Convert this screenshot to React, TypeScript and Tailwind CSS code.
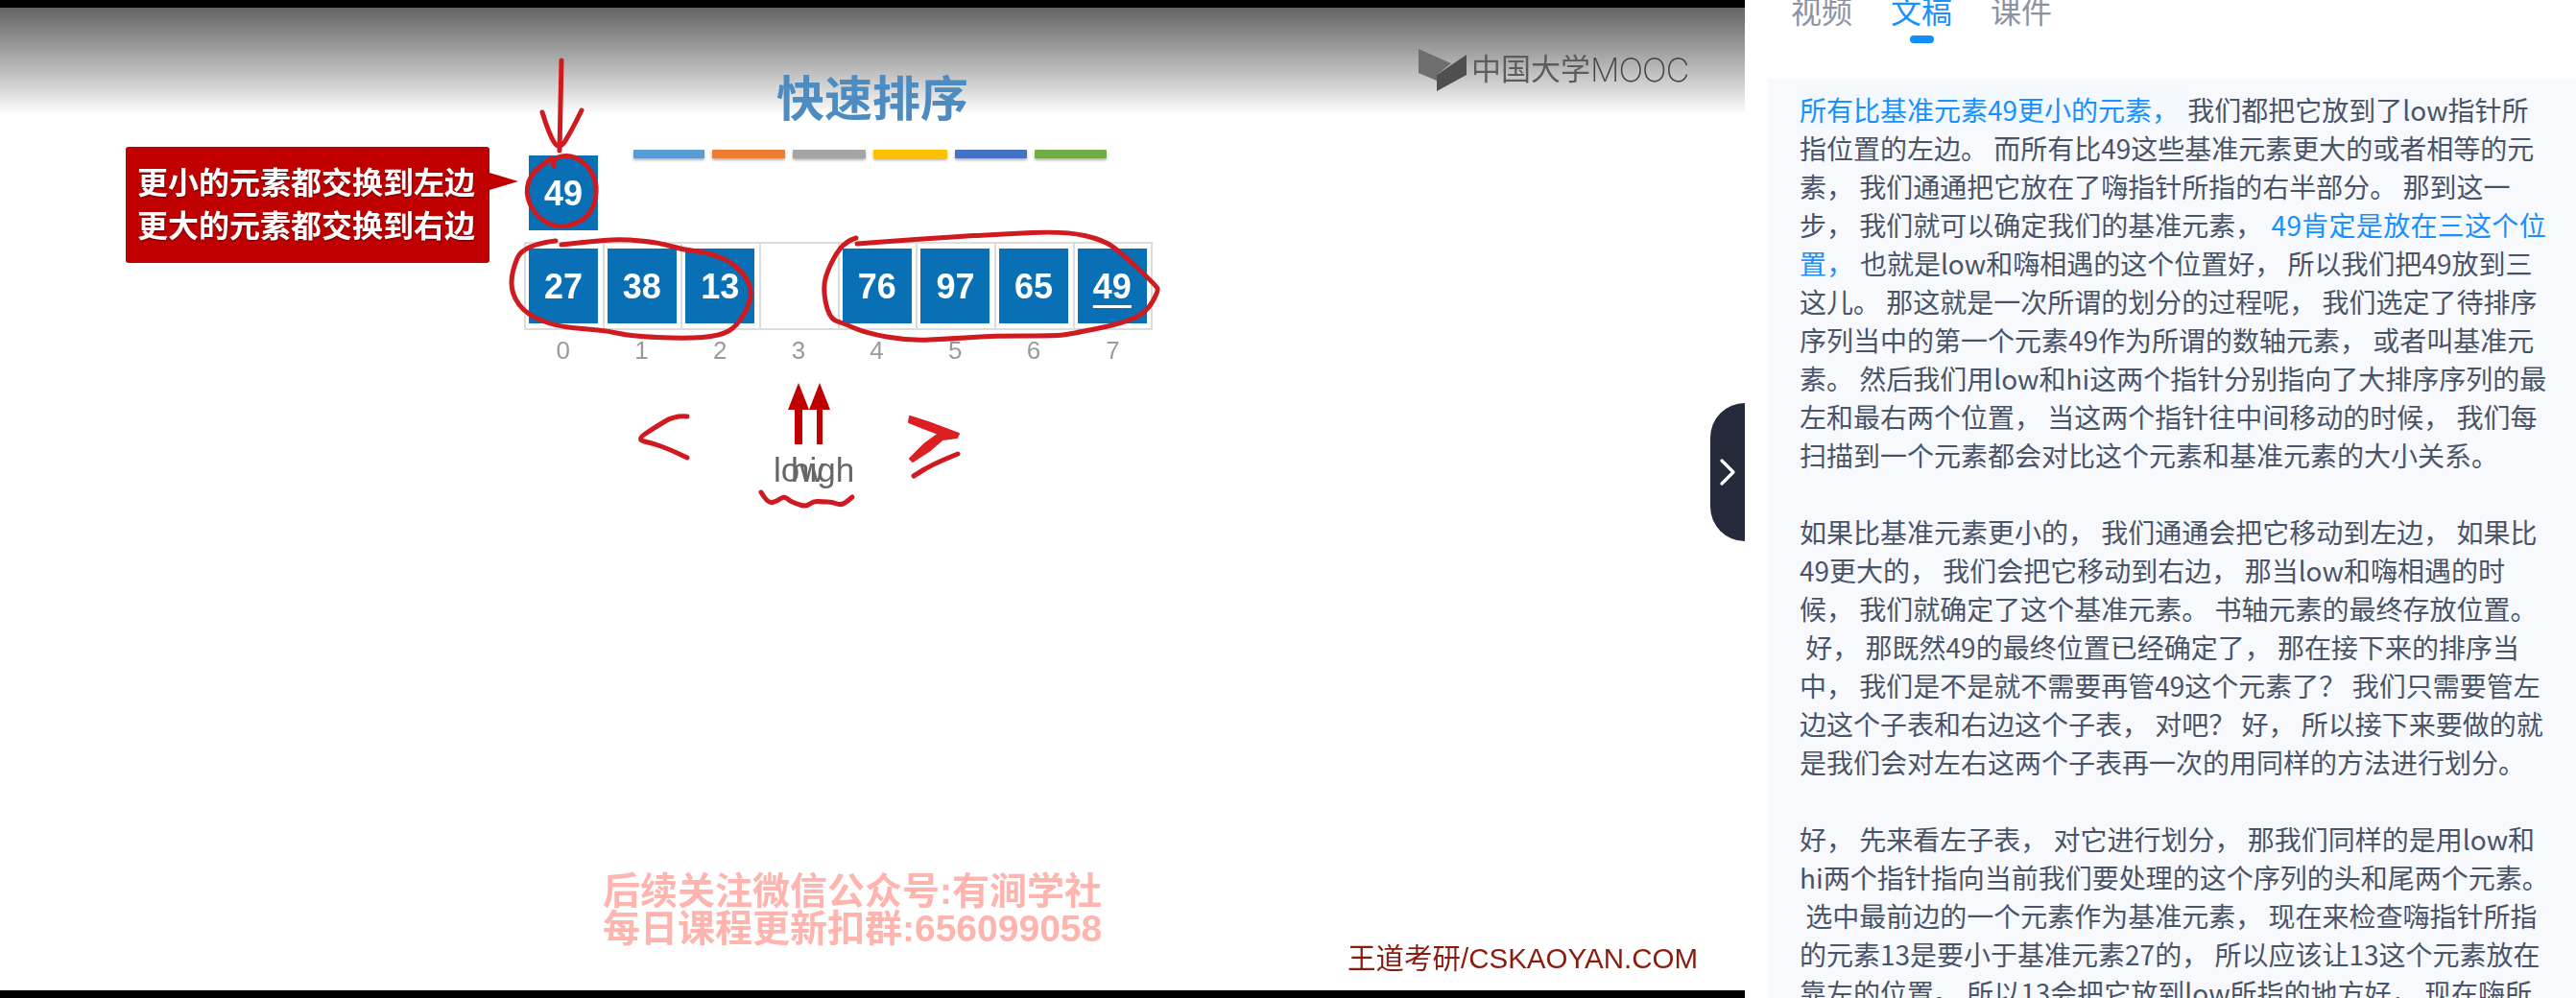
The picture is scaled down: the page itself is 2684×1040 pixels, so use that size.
import React from 'react';
import { ChevronRight } from 'lucide-react';

type Pt = [number, number];

// freehand strokes: smooth through the midpoints
const smooth = (pts: Pt[]) => {
  let d = `M${pts[0][0]} ${pts[0][1]}`;
  for (let i = 1; i < pts.length - 1; i++) {
    const mx = (pts[i][0] + pts[i + 1][0]) / 2;
    const my = (pts[i][1] + pts[i + 1][1]) / 2;
    d += ` Q${pts[i][0]} ${pts[i][1]} ${mx} ${my}`;
  }
  const last = pts[pts.length - 1];
  return `${d} L${last[0]} ${last[1]}`;
};

const strokes: Pt[][] = [
  [[585, 63], [584, 110], [583, 157]],
  [[565, 117], [572, 140], [583, 157], [596, 135], [606, 115]],
  [[577, 173], [574, 165], [597, 161], [617, 177], [623, 200], [614, 227], [586, 238], [563, 230], [548, 207], [551, 183], [574, 165]],
  [[579, 251], [545, 255], [533, 283], [533, 307], [549, 328], [580, 340], [612, 343], [634, 345], [656, 350], [714, 353], [750, 350], [768, 340], [783, 313], [781, 293], [763, 273], [737, 263], [710, 260], [688, 253], [647, 249], [612, 252], [585, 255]],
  [[892, 248], [879, 252], [864, 277], [857, 300], [864, 332], [879, 337], [902, 347], [946, 355], [991, 353], [1036, 350], [1103, 350], [1120, 347], [1170, 337], [1195, 325], [1207, 303], [1205, 298], [1170, 265], [1150, 250], [1110, 241], [1040, 244], [960, 249], [893, 254]],
  [[716, 434], [703, 433], [683, 445], [663, 458], [680, 462], [697, 468], [716, 477]],
  [[998, 473], [973, 483], [952, 496]],
  [[793, 513], [800, 525], [810, 522], [817, 517], [823, 522], [830, 525], [840, 528], [848, 522], [857, 523], [867, 523], [877, 527], [888, 518]],
];

const cells = ['27', '38', '13', '', '76', '97', '65', '49'];
const bars = [
  'w-[74px] bg-[#5b9bd5]',
  'w-[76px] bg-[#ed7d31]',
  'w-[76px] bg-[#a5a5a5]',
  'w-[77px] bg-[#ffc000]',
  'w-[75px] bg-[#4472c4]',
  'w-[75px] bg-[#70ad47]',
];

const Slide = () => (
  <div className="relative flex-1 overflow-hidden bg-white font-['Liberation_Sans','Noto_Sans_CJK_SC',sans-serif] blur-[0.5px]">
    <div className="h-[112px] bg-linear-to-b from-[#656565] to-white" />

    {/* logo */}
    <div className="absolute left-[1478px] top-[42px] flex items-center">
      <svg width="50" height="46" viewBox="1478 50 50 46">
        <path d="M1478 51 L1512 66 L1497 78 L1497 84 L1478 76 Z" fill="#6e6e6e" />
        <path d="M1497 78 L1528 57 L1528 78 L1497 95 Z" fill="#4f4f4f" />
      </svg>
      <span className="ml-[5px] text-[31px] leading-[36px] text-[#5c5c5c]">中国大学</span>
      <span className="text-[34px] leading-[36px] font-extralight tracking-[-1px] text-[#444] font-['Inter',sans-serif]">MOOC</span>
    </div>

    {/* title */}
    <div className="absolute left-[809px] top-[64px] text-[50px] leading-[64px] font-bold text-[#4d8cc0]">快速排序</div>
    <div className="absolute left-[660px] top-[148px] flex gap-[8px]">
      {bars.map((bar) => (
        <div key={bar} className={`h-[9px] rounded-[1px] shadow-[0_2px_3px_rgba(0,0,0,0.3)] ${bar}`} />
      ))}
    </div>

    {/* callout */}
    <div className="absolute left-[131px] top-[145px] flex items-start">
      <div className="flex h-[121px] w-[379px] flex-col rounded-[3px] bg-[#c00000] pl-[12px] pt-[16px] text-[32px] leading-[45px] font-bold text-white [text-shadow:0_1px_2px_rgba(0,0,0,0.5)]">
        <span>更小的元素都交换到左边</span>
        <span>更大的元素都交换到右边</span>
      </div>
      <div className="mt-[27px] h-0 w-0 border-y-[9px] border-l-[30px] border-y-transparent border-l-[#c00000]" />
    </div>

    {/* pivot */}
    <div className="absolute left-[551px] top-[154px] flex h-[78px] w-[72px] items-center justify-center bg-[#0a70b5] pt-[2px] text-[36px] font-bold text-white">
      49
    </div>

    {/* array */}
    <div className="absolute left-[546px] top-[244px] w-[655px]">
      <div className="grid h-[92px] grid-cols-[repeat(7,81.7px)_1fr] border-2 border-[#dcdcdc]">
        {cells.map((value, i) => (
          <div key={i} className="border-r-2 border-[#dcdcdc] pl-[3px] pt-[5px] last:border-r-0">
            {value && (
              <div className="flex h-[78px] w-[72px] items-center justify-center bg-[#0a70b5] pt-[2px] text-[36px] font-bold text-white">
                <span className={i === 7 ? 'underline decoration-[3px] underline-offset-[7px]' : ''}>{value}</span>
              </div>
            )}
          </div>
        ))}
      </div>
      <div className="mt-[6px] grid grid-cols-[repeat(7,81.7px)_1fr] text-center text-[26px] leading-[30px] text-[#999]">
        {cells.map((_, i) => (
          <span key={i}>{i}</span>
        ))}
      </div>
    </div>

    {/* pointers */}
    <div className="absolute left-[806px] top-[462px] text-[35px] leading-[40px] text-[#666]">low</div>
    <div className="absolute left-[824px] top-[462px] text-[35px] leading-[40px] text-[#666]">high</div>

    {/* pen strokes and arrows */}
    <svg className="absolute left-0 top-0" width="1818" height="1024" viewBox="0 8 1818 1024" fill="none">
      <path d="M832 399 L821 427 L828 427 L828 463 L836 463 L836 427 L843 427 Z" fill="#c00000" />
      <path d="M854 399 L843 427 L851 427 L851 463 L857 463 L857 427 L865 427 Z" fill="#c00000" />
      {strokes.map((pts, i) => (
        <path key={i} d={smooth(pts)} stroke="#cf1a1f" strokeWidth="5" strokeLinecap="round" strokeLinejoin="round" />
      ))}
      <path d="M948 434 L967 440 L999 452 L997 456 L982 458 L968 470 L951 481 L948 478 L964 462 L978 452 L962 446 L947 440 Z" fill="#db1f22" stroke="#db1f22" strokeWidth="2" strokeLinejoin="round" />
    </svg>

    {/* watermark */}
    <div className="absolute left-[628px] top-[901px] text-[39px] leading-[39px] font-bold text-[#ffb4ae] whitespace-nowrap">
      <div>后续关注微信公众号:有涧学社</div>
      <div>每日课程更新扣群:656099058</div>
    </div>
    <div className="absolute left-[1404px] top-[973px] whitespace-nowrap text-[29.5px] leading-[36px] text-[#8a1c0e]">
      王道考研/CSKAOYAN.COM
    </div>
  </div>
);

const Mark = ({ children }: { children: React.ReactNode }) => (
  <span className="ml-[3px] tracking-[0.3px] text-[#1890ff]">{children}</span>
);

export default function App() {
  return (
    <div className="flex h-[1040px] w-[2684px] overflow-hidden bg-white">
      <div className="flex w-[1818px] shrink-0 flex-col bg-black py-2">
        <Slide />
      </div>

      <div className="relative flex-1 font-['Noto_Sans_CJK_SC',sans-serif]">
        {/* collapse handle */}
        <button className="absolute right-full top-[420px] flex h-[144px] w-[36px] items-center justify-center rounded-l-[36px] bg-[#252b3a] text-white">
          <ChevronRight size={48} strokeWidth={1.6} className="shrink-0" />
        </button>

        <div className="flex h-[82px] gap-[40px] pl-[48px] text-[32px] leading-[32px] text-[#8b93a3]">
          {['视频', '文稿', '课件'].map((tab) => (
            <div key={tab} className="-mt-[6px] flex flex-col items-center">
              <span className={tab === '文稿' ? 'text-[#1890ff]' : ''}>{tab}</span>
              {tab === '文稿' && <span className="mt-[11px] h-[8px] w-[25px] rounded-full bg-[#0f8fff]" />}
            </div>
          ))}
        </div>

        <div className="ml-[24px] h-[958px] overflow-hidden bg-[#f7f9fd] pl-[33px] pr-[25px] pt-[12px] text-[28px] leading-[40px] text-[#4a5468]">
          <p>
            <span className="bg-[#f3f9fe] pr-[3px] text-[#1890ff]">所有比基准元素49更小的元素， </span>
            我们都把它放到了low指针所指位置的左边。 而所有比49这些基准元素更大的或者相等的元素， 我们通通把它放在了嗨指针所指的右半部分。 那到这一步， 我们就可以确定我们的基准元素，{' '}
            <Mark>49肯定是放在三这个位置，</Mark> 也就是low和嗨相遇的这个位置好， 所以我们把49放到三这儿。 那这就是一次所谓的划分的过程呢， 我们选定了待排序序列当中的第一个元素49作为所谓的数轴元素， 或者叫基准元素。 然后我们用low和hi这两个指针分别指向了大排序序列的最左和最右两个位置， 当这两个指针往中间移动的时候， 我们每扫描到一个元素都会对比这个元素和基准元素的大小关系。
          </p>
          <p className="mt-[40px]">
            如果比基准元素更小的， 我们通通会把它移动到左边， 如果比49更大的， 我们会把它移动到右边， 那当low和嗨相遇的时候， 我们就确定了这个基准元素。 书轴元素的最终存放位置。 {'\u00A0'}好， 那既然49的最终位置已经确定了， 那在接下来的排序当中， 我们是不是就不需要再管49这个元素了？ 我们只需要管左边这个子表和右边这个子表， 对吧？ 好， 所以接下来要做的就是我们会对左右这两个子表再一次的用同样的方法进行划分。
          </p>
          <p className="mt-[40px]">
            好， 先来看左子表， 对它进行划分， 那我们同样的是用low和hi两个指针指向当前我们要处理的这个序列的头和尾两个元素。 {'\u00A0'}选中最前边的一个元素作为基准元素， 现在来检查嗨指针所指的元素13是要小于基准元素27的， 所以应该让13这个元素放在靠左的位置。 所以13会把它放到low所指的地方好， 现在嗨所指的元素
          </p>
        </div>
      </div>
    </div>
  );
}
